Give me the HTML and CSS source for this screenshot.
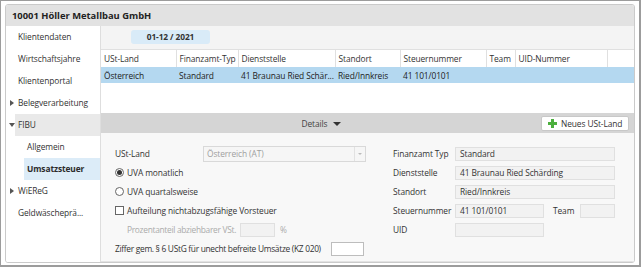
FILE: index.html
```html
<!DOCTYPE html>
<html lang="de">
<head>
  <meta charset="UTF-8" />
  <title>Umsatzsteuer</title>
  <link rel="stylesheet" href="styles.css">
</head>
<body>
  <div class="frame">
    <div class="panel">
      <div class="panel-title">10001 Höller Metallbau GmbH</div>
      <div class="panel-body">
        <nav class="sidebar">
          <div class="nav-item"><span class="twisty"></span><span class="label">Klientendaten</span></div>
          <div class="nav-item"><span class="twisty"></span><span class="label">Wirtschaftsjahre</span></div>
          <div class="nav-item"><span class="twisty"></span><span class="label">Klientenportal</span></div>
          <div class="nav-item"><span class="twisty closed"></span><span class="label">Belegverarbeitung</span></div>
          <div class="nav-item group-open"><span class="twisty open"></span><span class="label">FIBU</span></div>
          <div class="nav-item sub"><span class="twisty"></span><span class="label">Allgemein</span></div>
          <div class="nav-item sub selected"><span class="twisty"></span><span class="label">Umsatzsteuer</span></div>
          <div class="nav-item"><span class="twisty closed"></span><span class="label">WiEReG</span></div>
          <div class="nav-item"><span class="twisty"></span><span class="label">Geldwäscheprä...</span></div>
        </nav>

        <div class="content">
          <div class="toolbar">
            <span class="period">01-12 / 2021</span>
          </div>

          <table class="list">
            <colgroup>
              <col style="width:75px"><col style="width:62px"><col style="width:97px">
              <col style="width:65px"><col style="width:86px"><col style="width:29px">
              <col style="width:92px"><col>
            </colgroup>
            <thead>
              <tr>
                <th>USt-Land</th>
                <th>Finanzamt-Typ</th>
                <th>Dienststelle</th>
                <th>Standort</th>
                <th>Steuernummer</th>
                <th>Team</th>
                <th>UID-Nummer</th>
                <th class="last"></th>
              </tr>
            </thead>
            <tbody>
              <tr class="row-selected">
                <td>Österreich</td>
                <td>Standard</td>
                <td>41 Braunau Ried Schär...</td>
                <td>Ried/Innkreis</td>
                <td>41 101/0101</td>
                <td></td>
                <td></td>
                <td></td>
              </tr>
            </tbody>
          </table>
          <div class="list-space"></div>

          <div class="details-bar">
            <div class="details-toggle">Details <span class="down-arrow"></span></div>
            <button class="btn-new"><span class="plus"></span>Neues USt-Land</button>
          </div>

          <div class="details-form">
            <div class="form-col left">
              <div class="form-row">
                <span class="lbl w-ustland">USt-Land</span>
                <div class="select">
                  <span class="select-text">Österreich (AT)</span>
                  <span class="select-btn"><span class="select-arrow"></span></span>
                </div>
              </div>
              <div class="form-row">
                <span class="radio checked"></span><span class="opt">UVA monatlich</span>
              </div>
              <div class="form-row">
                <span class="radio"></span><span class="opt">UVA quartalsweise</span>
              </div>
              <div class="form-row">
                <span class="checkbox"></span><span class="opt">Aufteilung nichtabzugsfähige Vorsteuer</span>
              </div>
              <div class="form-row indent">
                <span class="lbl disabled w-prozent">Prozentanteil abziehbarer VSt.</span>
                <span class="field small"></span>
                <span class="disabled pct">%</span>
              </div>
              <div class="form-row">
                <span class="lbl w-ziffer">Ziffer gem. § 6 UStG für unecht befreite Umsätze (KZ 020)</span>
                <span class="field white"></span>
              </div>
            </div>

            <div class="form-col right">
              <div class="form-row">
                <span class="lbl w-right">Finanzamt Typ</span>
                <span class="field wide">Standard</span>
              </div>
              <div class="form-row">
                <span class="lbl w-right">Dienststelle</span>
                <span class="field wide">41 Braunau Ried Schärding</span>
              </div>
              <div class="form-row">
                <span class="lbl w-right">Standort</span>
                <span class="field wide">Ried/Innkreis</span>
              </div>
              <div class="form-row">
                <span class="lbl w-right">Steuernummer</span>
                <span class="field mid">41 101/0101</span>
                <span class="lbl w-team">Team</span>
                <span class="field small"></span>
              </div>
              <div class="form-row">
                <span class="lbl w-right">UID</span>
                <span class="field mid"></span>
              </div>
            </div>
          </div>
        </div>
      </div>
    </div>
  </div>
</body>
</html>
```

FILE: styles.css
```css
* {
  box-sizing: border-box;
}
body {
  margin: 0;
  font-family: 'Open Sans', 'Noto Sans', sans-serif;
  font-size: 8.4px;
  letter-spacing: -0.1px;
  color: #333;
  background: #fff;
}
.frame {
  width: 641px;
  height: 267px;
  border: solid #9c9c9c;
  border-width: 1px 2px 2px 1px;
  padding: 3px 4px 2px 4px;
  background: #fff;
}
.panel {
  height: 100%;
  border: 1px solid #cacaca;
  border-radius: 3px;
  overflow: hidden;
  display: flex;
  flex-direction: column;
}
.panel-title {
  height: 21px;
  line-height: 21px;
  padding-left: 6px;
  background: #e2e2e2;
  font-weight: bold;
  font-size: 9.4px;
  letter-spacing: 0;
  color: #222;
}
.panel-body {
  flex: 1;
  display: flex;
}

/* sidebar */
.sidebar {
  width: 95px;
  border-right: 1px solid #dedede;
  background: #fff;
}
.nav-item {
  display: flex;
  height: 22px;
  padding-left: 3px;
}
.nav-item.sub {
  padding-left: 12px;
}
.twisty {
  width: 6px;
  position: relative;
}
.twisty.closed::after {
  content: "";
  position: absolute;
  left: 1px;
  top: 8px;
  border-left: 4px solid #555;
  border-top: 3px solid transparent;
  border-bottom: 3px solid transparent;
}
.twisty.open::after {
  content: "";
  position: absolute;
  left: 0;
  top: 9px;
  border-top: 4px solid #555;
  border-left: 3px solid transparent;
  border-right: 3px solid transparent;
}
.nav-item .label {
  flex: 1;
  line-height: 22px;
  padding-left: 3px;
  white-space: nowrap;
}
.group-open .label {
  background: #e9e9e9;
}
.selected .label {
  background: #dcecf8;
  font-weight: bold;
  color: #2b2b2b;
}

/* main area */
.content {
  flex: 1;
  display: flex;
  flex-direction: column;
  min-width: 0;
}
.toolbar {
  height: 24px;
  background: #f4f4f4;
  border-bottom: 1px solid #e0e0e0;
  padding: 4px 0 0 30px;
}
.period {
  display: inline-block;
  width: 79px;
  height: 14px;
  line-height: 14px;
  text-align: center;
  background: #d9ebf8;
  border-radius: 3px;
  font-weight: bold;
}
.list {
  width: 100%;
  table-layout: fixed;
  border-collapse: collapse;
}
.list th {
  height: 17px;
  font-weight: normal;
  text-align: left;
  padding: 0 0 0 3px;
  border-right: 1px solid #e0e0e0;
  white-space: nowrap;
  overflow: hidden;
}
.list th.last {
  border-right: none;
}
.list td {
  height: 16px;
  padding: 0 0 0 3px;
  white-space: nowrap;
  overflow: hidden;
  color: #222;
}
.row-selected td {
  background: #b4d8f0;
}
.list-space {
  height: 30px;
}

/* details bar */
.details-bar {
  height: 20px;
  display: flex;
  align-items: center;
  background: #d5d5d5;
}
.details-toggle {
  flex: 1;
  text-align: center;
  color: #444;
}
.down-arrow {
  display: inline-block;
  margin-left: 3px;
  vertical-align: middle;
  border-top: 4px solid #333;
  border-left: 4px solid transparent;
  border-right: 4px solid transparent;
}
.btn-new {
  width: 88px;
  height: 15px;
  margin-right: 5px;
  padding: 0 0 0 6px;
  display: flex;
  align-items: center;
  white-space: nowrap;
  background: #fff;
  border: 1px solid #c8c8c8;
  border-radius: 2px;
  font-family: inherit;
  font-size: 8.4px;
  letter-spacing: -0.1px;
  color: #333;
}
.plus {
  position: relative;
  flex: none;
  width: 9px;
  height: 9px;
  margin-right: 4px;
}
.plus::before,
.plus::after {
  content: "";
  position: absolute;
  background: #4caf3e;
}
.plus::before {
  left: 3px;
  top: 0;
  width: 3px;
  height: 9px;
}
.plus::after {
  left: 0;
  top: 3px;
  width: 9px;
  height: 3px;
}

/* details form */
.details-form {
  flex: 1;
  display: flex;
  gap: 27px;
  padding: 11px 0 0 14px;
  background: #f8f8f8;
  border-bottom: 1px solid #e2e2e2;
}
.form-col.left {
  width: 251px;
}
.form-col.right {
  width: 222px;
}
.form-row {
  height: 19px;
  display: flex;
  align-items: center;
  white-space: nowrap;
}
.form-row.indent {
  padding-left: 12px;
}
.lbl {
  flex: none;
}
.w-ustland { width: 88px; }
.w-prozent { width: 113px; letter-spacing: -0.3px; }
.w-ziffer { width: 216px; letter-spacing: -0.3px; }
.w-right { width: 62px; }
.w-team { width: 27px; margin-left: 9px; }
.disabled {
  color: #ababab;
}
.pct {
  margin-left: 5px;
}
.select {
  width: 163px;
  height: 16px;
  display: flex;
  background: #f6f6f6;
  border: 1px solid #d9d9d9;
}
.select-text {
  flex: 1;
  padding-left: 3px;
  line-height: 14px;
  color: #9f9f9f;
}
.select-btn {
  width: 11px;
  border-left: 1px solid #e2e2e2;
  position: relative;
}
.select-arrow {
  position: absolute;
  left: 3px;
  top: 6px;
  border-top: 2px solid #bbb;
  border-left: 2px solid transparent;
  border-right: 2px solid transparent;
}
.radio {
  flex: none;
  width: 9px;
  height: 9px;
  border: 1px solid #666;
  border-radius: 50%;
  background: #fff;
  margin-right: 3px;
  position: relative;
}
.radio.checked::after {
  content: "";
  position: absolute;
  left: 1px;
  top: 1px;
  width: 5px;
  height: 5px;
  border-radius: 50%;
  background: #333;
}
.checkbox {
  flex: none;
  width: 9px;
  height: 9px;
  border: 1px solid #666;
  background: #fff;
  margin-right: 3px;
}
.field {
  flex: none;
  height: 14px;
  line-height: 12px;
  padding-left: 4px;
  background: #f2f2f2;
  border: 1px solid #e0e0e0;
  color: #333;
}
.field.wide { width: 160px; }
.field.mid { width: 89px; }
.field.small { width: 35px; }
.field.white {
  width: 33px;
  background: #fff;
  border-color: #bdbdbd;
}
```
